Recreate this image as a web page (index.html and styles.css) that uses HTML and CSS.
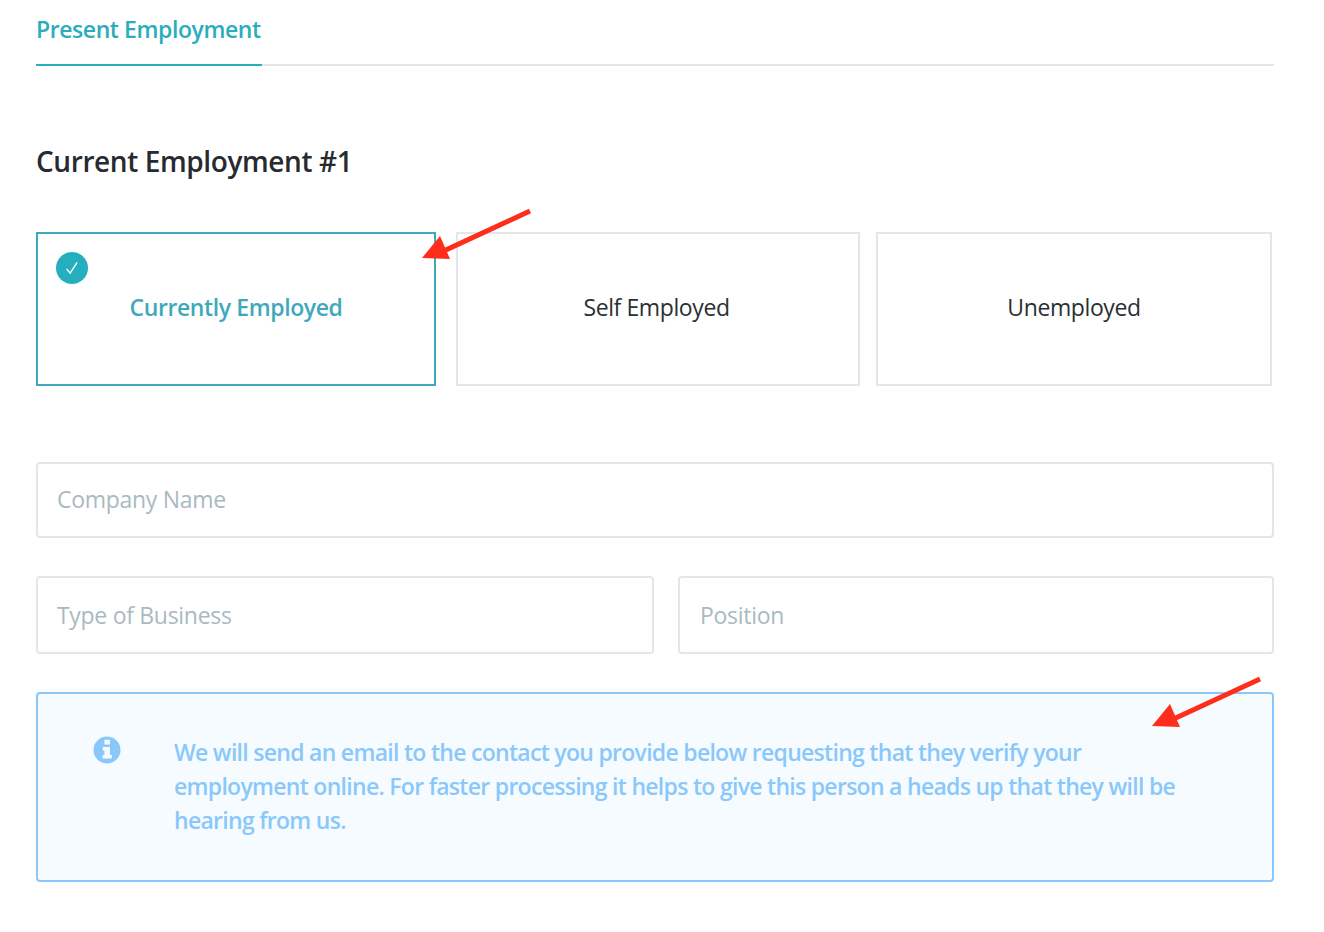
FILE: index.html
```html
<!DOCTYPE html>
<html lang="en">
<head>
<meta charset="utf-8">
<title>Present Employment</title>
<link rel="stylesheet" href="styles.css">
</head>
<body>
<main class="page">
  <nav class="tabs"><a class="tab">Present Employment</a></nav>
  <h2 class="title">Current Employment #1</h2>
  <div class="cards">
    <div class="card card-first card-active">
      <span class="check">
        <svg width="18" height="18" viewBox="0 0 14 14"><path d="M2.8 7.8 5.6 11 11 2.600" fill="none" stroke="#fff" stroke-width="1.100"/></svg>
      </span>
      <span class="card-label">Currently Employed</span>
    </div>
    <div class="card card-second"><span class="card-label">Self Employed</span></div>
    <div class="card card-third"><span class="card-label">Unemployed</span></div>
  </div>
  <input class="field field-full" placeholder="Company Name">
  <div class="field-row">
    <input class="field field-business" placeholder="Type of Business">
    <input class="field field-position" placeholder="Position">
  </div>
  <div class="notice">
    <svg class="notice-icon" width="28" height="28" viewBox="0 0 28 28">
      <circle cx="14" cy="14" r="13.5" fill="#8ac8fb"/>
      <path d="M11.4 3.800h5.600v4.800h-5.600zM9.800 11h7.200v8h1.800v3.600H9.600V19h1.800v-4.400H9.800z" fill="#f6fbff"/>
    </svg>
    <p class="notice-text">We will send an email to the contact you provide below requesting that they verify your employment online. For faster processing it helps to give this person a heads up that they will be hearing from us.</p>
  </div>
</main>
<svg class="arrow arrow-top" width="120" height="60" viewBox="0 0 120 60">
  <path d="M109 3 15 46.600" stroke="#ff2e1c" stroke-width="5" fill="none"/>
  <path d="M1 50 19 28 29 51z" fill="#ff2e1c"/>
</svg>
<svg class="arrow arrow-bottom" width="120" height="60" viewBox="0 0 120 60">
  <path d="M109 3 15 46.600" stroke="#ff2e1c" stroke-width="5" fill="none"/>
  <path d="M1 50 19 28 29 51z" fill="#ff2e1c"/>
</svg>
</body>
</html>
```
FILE: styles.css
```css
* { box-sizing: border-box; }
html, body { margin: 0; padding: 0; background: #fff; }
body {
  position: relative;
  height: 932px;
  overflow: hidden;
  font-family: "Open Sans", "Noto Sans", sans-serif;
}
.page { width: 1274px; padding-left: 36px; }
.tabs { height: 66px; border-bottom: 2px solid #e3e7ea; }
.tab {
  display: inline-block;
  width: 226px;
  height: 66px;
  padding: 14px 0 0 0;
  border-bottom: 2px solid #28adbd;
  color: #2cadbe;
  font-size: 23px;
  line-height: 30px;
  font-weight: 600;
  letter-spacing: -0.42px;
  white-space: nowrap;
}
.title {
  margin: 75px 0 0 0;
  height: 41px;
  color: #272b30;
  font-size: 28px;
  line-height: 40px;
  font-weight: 600;
  letter-spacing: -0.4px;
}
.cards { display: flex; margin-top: 50px; height: 154px; }
.card {
  position: relative;
  display: flex;
  justify-content: center;
  padding-top: 58px;
  border: 2px solid #e3e7ea;
  color: #2b2f33;
  font-size: 23px;
  line-height: 30px;
  letter-spacing: -0.4px;
}
.card-first { width: 400px; }
.card-second { width: 404px; margin-left: 20px; padding-right: 3px; }
.card-third { width: 396px; margin-left: 16px; }
.card-active { border-color: #3fa9bb; color: #3fa9bb; font-weight: 600; }
.check {
  position: absolute;
  left: 18px;
  top: 18px;
  width: 32px;
  height: 32px;
  display: flex;
  align-items: center;
  justify-content: center;
  border-radius: 50%;
  background: #25aebe;
}
.field {
  display: block;
  margin: 0;
  padding: 0 20px 2px 19px;
  border: 2px solid #e3e7ea;
  border-radius: 4px;
  background: #fff;
  outline: none;
  font-family: inherit;
  font-size: 23px;
  letter-spacing: -0.3px;
  color: #2b2f33;
}
.field::placeholder { color: #a9babf; opacity: 1; }
.field-full { width: 1238px; height: 76px; margin-top: 76px; }
.field-row { display: flex; gap: 24px; margin-top: 38px; }
.field-business { width: 618px; height: 78px; padding-bottom: 0; }
.field-position { width: 596px; height: 78px; padding-left: 20px; padding-bottom: 0; }
.notice {
  display: flex;
  align-items: flex-start;
  width: 1238px;
  height: 190px;
  margin-top: 38px;
  padding: 41px 0 0 55px;
  border: 2px solid #8ac8fb;
  border-radius: 4px;
  background: #f6fbff;
}
.notice-icon { flex: none; margin-top: 1px; }
.notice-text {
  width: 1040px;
  margin: 0 0 0 53px;
  color: #8ac8fb;
  font-size: 23px;
  line-height: 34px;
  font-weight: 600;
  letter-spacing: -0.71px;
}
.arrow { position: absolute; overflow: visible; }
.arrow-top { left: 421px; top: 208px; }
.arrow-bottom { left: 1151px; top: 676px; }
```
